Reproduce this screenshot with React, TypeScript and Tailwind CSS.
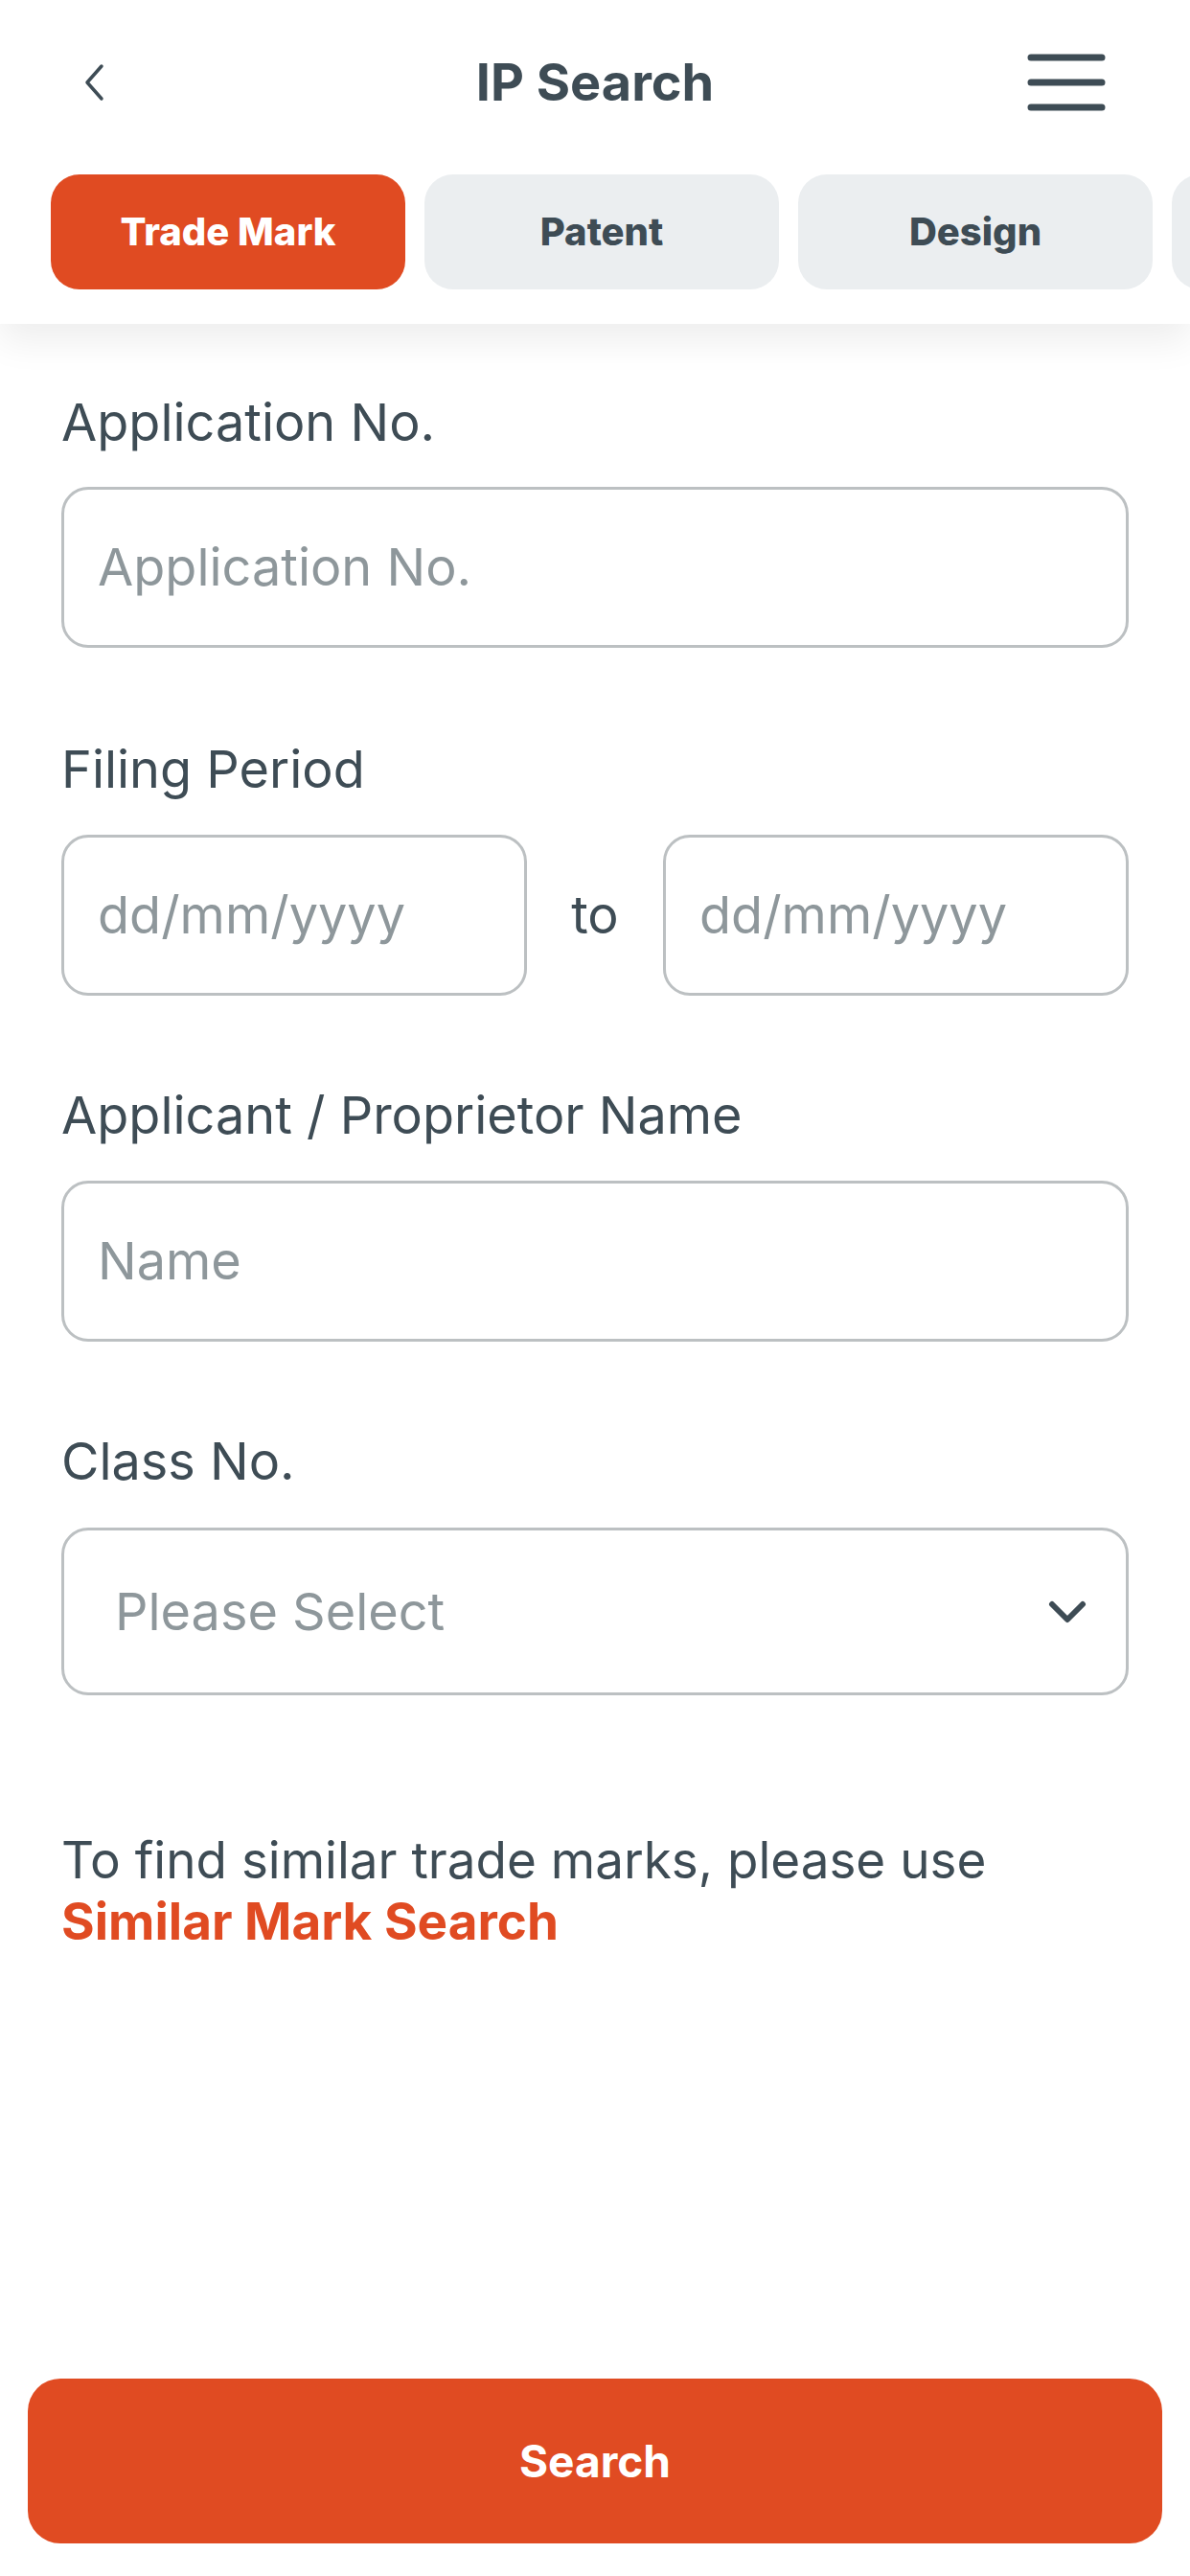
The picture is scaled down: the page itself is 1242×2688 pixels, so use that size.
export default function App() {
  const label = "text-[54px] leading-[64px] text-[#3e4c55]";
  const box =
    "h-[168px] rounded-[28px] border-[3px] border-[#bcc0c2] bg-white flex items-center text-[54px] leading-[64px] text-[#8e979b]";
  return (
    <div className="min-h-[2688px] w-[1242px] bg-white flex flex-col font-['Inter',sans-serif] text-[#3e4c55] overflow-hidden">
      <header className="relative z-10 bg-white pb-[36px] shadow-[0_18px_36px_rgba(0,0,0,0.07)]">
        <div className="h-[172px] grid grid-cols-[1fr_auto_1fr] items-center">
          <div className="pl-[86px] flex items-center">
            <svg width="24" height="40" viewBox="0 0 24 40" fill="none">
              <path d="M20 3 L5 20 L20 37" stroke="#3e4c55" strokeWidth="3.5" strokeLinecap="round" strokeLinejoin="round" />
            </svg>
          </div>
          <h1 className="text-[54px] leading-[64px] font-bold text-[#3e4c55]">IP Search</h1>
          <div className="pr-[88px] flex justify-end items-center">
            <svg width="82" height="60" viewBox="0 0 82 60" fill="none">
              <path d="M4 4 H78 M4 30 H78 M4 56 H78" stroke="#3e4c55" strokeWidth="7" strokeLinecap="round" />
            </svg>
          </div>
        </div>
        <div className="mt-[10px] flex gap-[20px] pl-[53px] overflow-hidden">
          <div className="w-[370px] h-[120px] shrink-0 rounded-[30px] bg-[#e04b22] flex items-center justify-center text-white text-[40px] font-extrabold">
            Trade Mark
          </div>
          <div className="w-[370px] h-[120px] shrink-0 rounded-[30px] bg-[#ebeef0] flex items-center justify-center text-[#3e4c55] text-[40px] font-extrabold">
            Patent
          </div>
          <div className="w-[370px] h-[120px] shrink-0 rounded-[30px] bg-[#ebeef0] flex items-center justify-center text-[#3e4c55] text-[40px] font-extrabold">
            Design
          </div>
          <div className="w-[370px] h-[120px] shrink-0 rounded-[30px] bg-[#ebeef0]" />
        </div>
      </header>

      <main className="px-[64px] pt-[71px] flex flex-col">
        <div className={label}>Application No.</div>
        <div className={`mt-[35px] pl-[35px] ${box}`}>Application No.</div>

        <div className={`mt-[95px] ${label}`}>Filing Period</div>
        <div className="mt-[36px] flex items-center">
          <div className={`flex-1 pl-[35px] ${box}`}>dd/mm/yyyy</div>
          <div className="w-[142px] text-center text-[54px] leading-[64px] text-[#3e4c55]">to</div>
          <div className={`flex-1 pl-[35px] ${box}`}>dd/mm/yyyy</div>
        </div>

        <div className={`mt-[93px] ${label}`}>Applicant / Proprietor Name</div>
        <div className={`mt-[36px] pl-[35px] ${box}`}>Name</div>

        <div className={`mt-[93px] ${label}`}>Class No.</div>
        <div className="mt-[37px] h-[175px] rounded-[28px] border-[3px] border-[#bcc0c2] bg-white flex items-center justify-between pl-[53px] pr-[41px] text-[54px] leading-[64px] text-[#8e979b]">
          <span>Please Select</span>
          <svg width="40" height="26" viewBox="0 0 40 26" fill="none">
            <path d="M4 5 L20 21 L36 5" stroke="#3e4c55" strokeWidth="6" strokeLinecap="round" strokeLinejoin="round" />
          </svg>
        </div>

        <p className="mt-[140px] text-[53px] leading-[64px] text-[#3e4c55]">
          To find similar trade marks, please use
          <br />
          <span className="font-bold text-[#e04b22]">Similar Mark Search</span>
        </p>
      </main>

      <div className="mt-auto px-[29px] pb-[34px]">
        <button className="w-full h-[172px] rounded-[34px] bg-[#e04b22] text-white text-[46px] font-bold flex items-center justify-center">
          Search
        </button>
      </div>
    </div>
  );
}
